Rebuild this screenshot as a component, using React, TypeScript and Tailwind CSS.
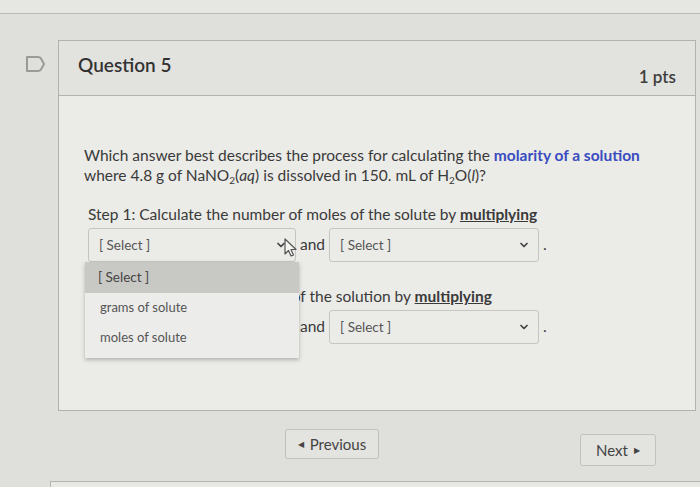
import { ChevronDown } from "lucide-react";

type SelectProps = {
  width: string;
  children?: React.ReactNode;
};

function SelectBox({ width, children }: SelectProps) {
  return (
    <div className={`relative ${width}`}>
      <div className="flex h-[34px] items-center justify-between rounded-[3px] border border-[#c6c6c1] bg-[#ebebe8] pl-[10px] pr-[8px]">
        <span className="text-[13.5px] text-[#555]">[ Select ]</span>
        <ChevronDown size={12} strokeWidth={3.5} className="text-[#444]" />
      </div>
      {children}
    </div>
  );
}

// Menu ouvert sous le premier select
function OpenMenu() {
  const options = ["grams of solute", "moles of solute"];
  return (
    <div className="absolute left-[-3px] top-full z-10 w-[214px] bg-[#ececea] pb-[5px] shadow-[0_2px_4px_rgba(0,0,0,0.25)]">
      <div className="flex h-[31px] items-center bg-[#c8c8c4] px-[13px] text-[13.5px] text-[#444]">
        [ Select ]
      </div>
      {options.map((o) => (
        <div key={o} className="flex h-[30px] items-center px-[15px] text-[13px] text-[#555]">
          {o}
        </div>
      ))}
    </div>
  );
}

function StepRow({ open }: { open?: boolean }) {
  return (
    <div className="mt-[4px] flex items-center">
      <SelectBox width="w-[208px]">{open && <OpenMenu />}</SelectBox>
      <span className="mx-[4px] text-[15.5px]">and</span>
      <SelectBox width="w-[210px]" />
      <span className="ml-[4px] text-[15.5px]">.</span>
    </div>
  );
}

export default function App() {
  return (
    <div className="relative h-[487px] w-[700px] overflow-hidden bg-[#dfdfdb] font-['Lato','Liberation_Sans',sans-serif] text-[#3a3a3a]">
      <div className="h-[14px] border-b border-[#b9b9b4] bg-[#e6e6e2]" />

      <div className="mt-[26px] flex">
        <div className="w-[58px] pl-[25px] pt-[15px]">
          <svg width="21" height="18" viewBox="0 0 21 18" fill="none">
            <path
              d="M2 2 H13 Q15 2 16 3.5 L19 9 L16 14.5 Q15 16 13 16 H2 Z"
              stroke="#9a9a96"
              strokeWidth="2"
              strokeLinejoin="round"
            />
          </svg>
        </div>

        <div className="mr-[4px] flex-1 border border-[#b3b3ae] bg-[#ebebe7]">
          <div className="flex h-[55px] justify-between border-b border-[#b3b3ae] bg-[#e2e2de] px-[19px]">
            <h2 className="pt-[10px] text-[19px] font-semibold text-[#333]">Question 5</h2>
            <span className="self-end pb-[6px] text-[17px] font-semibold text-[#3d3d3d]">1 pts</span>
          </div>

          <div className="px-[25px] pb-[66px] pt-[49px]">
            <p className="text-[15.5px] leading-[20px]">
              Which answer best describes the process for calculating the{" "}
              <span className="font-bold text-[#3a4cc0]">molarity of a solution</span>
              <br />
              where 4.8 g of NaNO<sub className="text-[10px]">2</sub>(<i>aq</i>) is dissolved in 150. mL of H
              <sub className="text-[10px]">2</sub>O(<i>l</i>)?
            </p>

            <div className="ml-[4px] mt-[19px]">
              <p className="text-[15.5px] leading-[20px]">
                Step 1: Calculate the number of moles of the solute by{" "}
                <span className="font-bold underline">multiplying</span>
              </p>
              <StepRow open />
            </div>

            <div className="ml-[4px] mt-[24px]">
              <p className="text-[15.5px] leading-[20px]">
                Step 2: Calculate the molarity of the solution by{" "}
                <span className="font-bold underline">multiplying</span>
              </p>
              <StepRow />
            </div>
          </div>
        </div>
      </div>

      <div className="mt-[18px] flex items-start pl-[285px]">
        <button className="flex h-[30px] w-[94px] items-center justify-center gap-[6px] rounded-[3px] border border-[#c2c2bd] bg-[#e3e3df] text-[15px] text-[#444]">
          <span className="text-[8px]">◀</span>
          Previous
        </button>
        <button className="ml-[201px] mt-[5px] flex h-[32px] w-[76px] items-center justify-center gap-[6px] rounded-[3px] border border-[#c2c2bd] bg-[#e3e3df] text-[15px] text-[#444]">
          Next
          <span className="text-[8px]">▶</span>
        </button>
      </div>

      <div className="ml-[50px] mt-[15px] h-[20px] border-l border-t border-[#b5b5b0] bg-[#e8e8e4]" />

      {/* pointeur de souris au-dessus de "and" */}
      <svg className="absolute left-[284px] top-[238px]" width="14" height="20" viewBox="0 0 14 20">
        <path
          d="M1 1 L1 16 L4.5 12.5 L7 18 L9.5 17 L7 11.5 L12 11.5 Z"
          fill="#f4f4f2"
          stroke="#555"
          strokeWidth="1.2"
          strokeLinejoin="round"
        />
      </svg>
    </div>
  );
}
